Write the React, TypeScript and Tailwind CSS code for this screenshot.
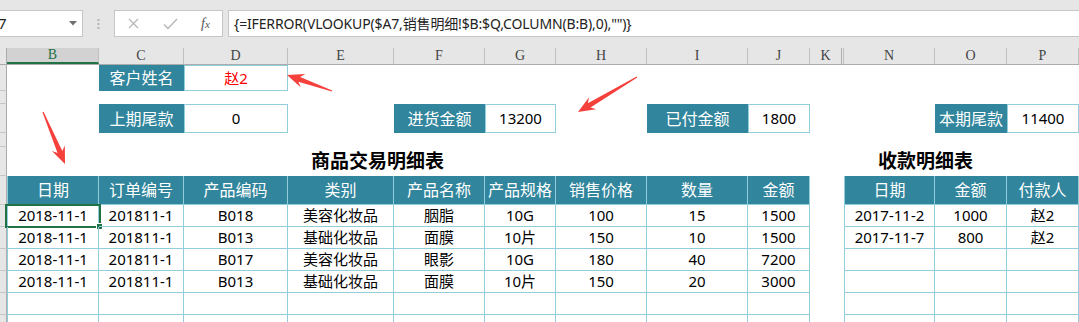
import React from "react";
import clsx from "clsx";

type Col = "B" | "C" | "D" | "E" | "F" | "G" | "H" | "I" | "J" | "K" | "X" | "N" | "O" | "P";

// column widths in px, copied from the sheet
const W: Record<Col, string> = {
  B: "w-[92px]",
  C: "w-[85px]",
  D: "w-[104px]",
  E: "w-[106px]",
  F: "w-[91px]",
  G: "w-[71px]",
  H: "w-[91px]",
  I: "w-[101px]",
  J: "w-[62px]",
  K: "w-[32px]",
  X: "w-[2px]",
  N: "w-[91px]",
  O: "w-[72px]",
  P: "w-[72px]",
};

const font = "font-['Noto_Sans','Noto_Sans_CJK_SC',sans-serif]";
const line = "border-[#92cddc]";

const Cell = ({ c, className, children }: { c: Col; className?: string; children?: React.ReactNode }) => (
  <div className={clsx("shrink-0 flex items-center justify-center whitespace-nowrap", W[c], className)}>{children}</div>
);

const Row = ({ h, children }: { h: string; children?: React.ReactNode }) => (
  <div className={clsx("flex", h)}>
    <div className="w-[7px] shrink-0 bg-[#e6e6e6] border-r border-b border-r-[#ababab] border-b-[#c6c6c6]" />
    {children}
  </div>
);

const Label = ({ c, text }: { c: Col; text: string }) => (
  <Cell c={c} className="bg-[#31859c] text-white text-[16px]">
    {text}
  </Cell>
);

const Value = ({ c, text, red }: { c: Col; text: string; red?: boolean }) => (
  <Cell c={c} className={clsx("border text-[15px]", line, red ? "text-[#ff0000]" : "text-black")}>
    {text}
  </Cell>
);

const leftCols: Col[] = ["B", "C", "D", "E", "F", "G", "H", "I", "J"];
const leftHead = ["日期", "订单编号", "产品编码", "类别", "产品名称", "产品规格", "销售价格", "数量", "金额"];
const leftRows = [
  ["2018-11-1", "201811-1", "B018", "美容化妆品", "胭脂", "10G", "100", "15", "1500"],
  ["2018-11-1", "201811-1", "B013", "基础化妆品", "面膜", "10片", "150", "10", "1500"],
  ["2018-11-1", "201811-1", "B017", "美容化妆品", "眼影", "10G", "180", "40", "7200"],
  ["2018-11-1", "201811-1", "B013", "基础化妆品", "面膜", "10片", "150", "20", "3000"],
  ["", "", "", "", "", "", "", "", ""],
  ["", "", "", "", "", "", "", "", ""],
];

const rightCols: Col[] = ["N", "O", "P"];
const rightHead = ["日期", "金额", "付款人"];
const rightRows = [
  ["2017-11-2", "1000", "赵2"],
  ["2017-11-7", "800", "赵2"],
  ["", "", ""],
  ["", "", ""],
  ["", "", ""],
  ["", "", ""],
];

const letters: Col[] = ["B", "C", "D", "E", "F", "G", "H", "I", "J", "K", "X", "N", "O", "P"];

function arrowPoints(tx: number, ty: number, hx: number, hy: number) {
  const dx = hx - tx;
  const dy = hy - ty;
  const len = Math.hypot(dx, dy);
  const ux = dx / len;
  const uy = dy / len;
  const px = -uy;
  const py = ux;
  const headLen = 17;
  const neck = 13;
  const bx = hx - ux * headLen;
  const by = hy - uy * headLen;
  const nx = hx - ux * neck;
  const ny = hy - uy * neck;
  const pts = [
    [tx + px * 0.6, ty + py * 0.6],
    [nx + px * 2.6, ny + py * 2.6],
    [bx + px * 7, by + py * 7],
    [hx, hy],
    [bx - px * 7, by - py * 7],
    [nx - px * 2.6, ny - py * 2.6],
    [tx - px * 0.6, ty - py * 0.6],
  ];
  return pts.map((p) => p.join(",")).join(" ");
}

const App = () => {
  return (
    <div className={clsx("relative w-[1079px] h-[322px] overflow-hidden bg-white", font)}>
      {/* formula bar */}
      <div className="flex items-start h-[48px] pt-[10px] bg-[#e6e6e6]">
        <div className="flex items-center justify-between w-[83px] h-[27px] pr-[5px] bg-white border border-l-0 border-[#c6c6c6]">
          <span className="-ml-[2px] text-[15px] text-[#222]">7</span>
          <svg width="8" height="5" viewBox="0 0 8 5">
            <path d="M0 0h8L4 4.5z" fill="#6f6f6f" />
          </svg>
        </div>
        <div className="flex items-center justify-center w-[31px] h-[27px]">
          <svg width="3" height="10" viewBox="0 0 3 10">
            <rect x="0.5" y="0" width="2" height="2" fill="#b4b4b4" />
            <rect x="0.5" y="4" width="2" height="2" fill="#b4b4b4" />
            <rect x="0.5" y="8" width="2" height="2" fill="#b4b4b4" />
          </svg>
        </div>
        <div className="flex items-center w-[109px] h-[27px] bg-white border border-[#c6c6c6]">
          <svg className="ml-[13px]" width="11" height="11" viewBox="0 0 11 11">
            <path d="M1 1l9 9M10 1l-9 9" stroke="#b8b8b8" strokeWidth="1.3" />
          </svg>
          <svg className="ml-[24px]" width="15" height="12" viewBox="0 0 15 12">
            <path d="M1 6.5l4 4L14 1" stroke="#b8b8b8" strokeWidth="1.5" fill="none" />
          </svg>
          <span className="ml-[23px] text-[14px] italic text-[#555] font-['Liberation_Serif',serif]">
            f<span className="text-[11px]">x</span>
          </span>
        </div>
        <div className="flex items-center flex-1 h-[27px] ml-[5px] pl-[5px] bg-white border border-r-0 border-[#c6c6c6] text-[14px] text-[#222] tracking-[-0.15px]">
          {'{=IFERROR(VLOOKUP($A7,销售明细!$B:$Q,COLUMN(B:B),0),"")}'}
        </div>
      </div>

      {/* column letters */}
      <div className="flex h-[17px] bg-[#e6e6e6] border-b border-[#ababab] font-['Liberation_Serif',serif] text-[14px] text-[#444]">
        <div className="w-[7px] shrink-0 border-r border-[#ababab]" />
        {letters.map((c) => (
          <div
            key={c}
            className={clsx(
              "shrink-0 flex items-center justify-center border-r border-[#c0c0c0] leading-none",
              W[c],
              c === "B" && "bg-[#d2d2d2] text-[#217346] border-b-2 border-b-[#217346]",
              c === "K" && "border-r-[#b0b0b0]"
            )}
          >
            {c === "X" ? "" : c}
          </div>
        ))}
      </div>

      {/* row 1 */}
      <Row h="h-[26px]">
        <Cell c="B" />
        <Label c="C" text="客户姓名" />
        <Value c="D" text="赵2" red />
      </Row>
      <Row h="h-[13px]" />
      {/* row 3 */}
      <Row h="h-[29px]">
        <Cell c="B" />
        <Label c="C" text="上期尾款" />
        <Value c="D" text="0" />
        <Cell c="E" />
        <Label c="F" text="进货金额" />
        <Value c="G" text="13200" />
        <Cell c="H" />
        <Label c="I" text="已付金额" />
        <Value c="J" text="1800" />
        <Cell c="K" />
        <Cell c="X" />
        <Cell c="N" />
        <Label c="O" text="本期尾款" />
        <Value c="P" text="11400" />
      </Row>
      <Row h="h-[14px]" />
      {/* titles */}
      <Row h="h-[29px]">
        <div className="flex items-center justify-center w-[741px] shrink-0 text-[19px] font-bold text-black">商品交易明细表</div>
        <Cell c="J" />
        <Cell c="K" />
        <Cell c="X" />
        <div className="flex items-center justify-center w-[163px] shrink-0 text-[19px] font-bold text-black">收款明细表</div>
      </Row>
      {/* table headers */}
      <Row h="h-[29px]">
        {leftCols.map((c, i) => (
          <Cell
            key={c}
            c={c}
            className={clsx("bg-[#31859c] text-white text-[16px] border-r border-b", line, i === 0 && "border-l")}
          >
            {leftHead[i]}
          </Cell>
        ))}
        <Cell c="K" />
        <Cell c="X" />
        {rightCols.map((c, i) => (
          <Cell
            key={c}
            c={c}
            className={clsx("bg-[#31859c] text-white text-[16px] border-r border-b", line, i === 0 && "border-l")}
          >
            {rightHead[i]}
          </Cell>
        ))}
      </Row>
      {/* table rows */}
      {leftRows.map((r, ri) => (
        <Row key={ri} h="h-[22px]">
          {leftCols.map((c, i) => (
            <Cell key={c} c={c} className={clsx("relative text-[15px] text-black border-r border-b", line, i === 0 && "border-l")}>
              {r[i]}
              {ri === 0 && i === 0 && (
                <>
                  <div className="absolute -left-[3px] -top-[1px] w-[96px] h-[24px] border-2 border-[#217346]" />
                  <div className="absolute -right-[5px] -bottom-[4px] w-[7px] h-[7px] bg-[#217346] border border-white" />
                </>
              )}
            </Cell>
          ))}
          <Cell c="K" />
          <Cell c="X" />
          {rightCols.map((c, i) => (
            <Cell key={c} c={c} className={clsx("text-[15px] text-black border-r border-b", line, i === 0 && "border-l")}>
              {rightRows[ri][i]}
            </Cell>
          ))}
        </Row>
      ))}

      {/* red callout arrows */}
      <svg className="absolute left-0 top-0 pointer-events-none" width="1079" height="322">
        <polygon points={arrowPoints(332, 91, 287, 75)} fill="#f5403c" />
        <polygon points={arrowPoints(43, 112, 65, 164)} fill="#f5403c" />
        <polygon points={arrowPoints(637, 77, 578, 112)} fill="#f5403c" />
      </svg>
    </div>
  );
};

export default App;
